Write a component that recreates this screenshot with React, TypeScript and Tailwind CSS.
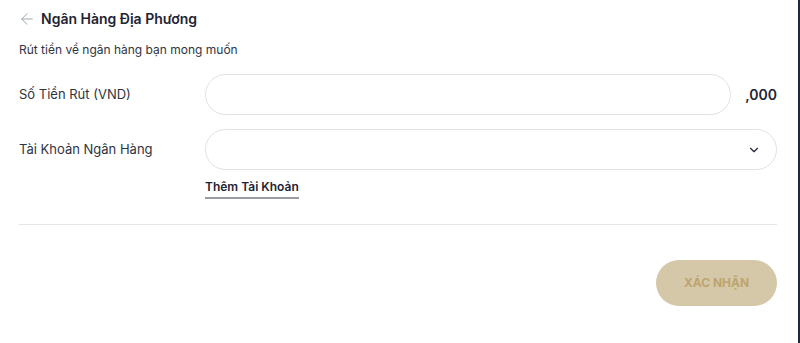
import { ArrowLeft, ChevronDown } from 'lucide-react';

export default function App() {
  return (
    <div className="flex h-[343px] w-[800px] bg-white font-['Inter',sans-serif] text-[#1f2433]">
      <div className="flex flex-1 flex-col pl-[19px] pr-[20px]">
        <div className="flex h-[37px] items-center gap-[5px]">
          <ArrowLeft size={18} strokeWidth={1.25} className="-ml-[1px] text-gray-400" />
          <h1 className="text-[14px] font-semibold">Ngân Hàng Địa Phương</h1>
        </div>
        <p className="mt-[5px] text-[12px] leading-[16px] text-[#30343f]">Rút tiền về ngân hàng bạn mong muốn</p>

        <div className="mt-[16px] flex items-center">
          <label className="w-[186px] text-[13px] text-[#30343f]">Số Tiền Rút (VND)</label>
          <input
            type="text"
            className="h-[41px] flex-1 rounded-full border border-[#e2e2e2] px-4 text-sm focus:outline-none"
          />
          <span className="ml-[14px] text-[14px] font-semibold">,000</span>
        </div>

        <div className="mt-[14px] flex items-center">
          <label className="w-[186px] text-[13px] text-[#30343f]">Tài Khoản Ngân Hàng</label>
          <div className="flex h-[41px] flex-1 items-center justify-end rounded-full border border-[#e2e2e2] pr-[15px]">
            <ChevronDown size={14} strokeWidth={2} className="text-[#1f2433]" />
          </div>
        </div>
        <div className="ml-[186px] mt-[3px]">
          <span className="inline-block border-b-2 border-[#9a9ca3] pb-[1px] text-[12px] font-semibold">Thêm Tài Khoản</span>
        </div>

        <div className="mt-[25px] h-px bg-[#e6e6e6]" />

        <div className="mt-[35px] flex justify-end">
          <button className="h-[46px] w-[121px] rounded-full bg-[#d5c8a9] text-[12px] font-bold text-[#bda46e]">
            XÁC NHẬN
          </button>
        </div>
      </div>
      <div className="w-px bg-white" />
      <div className="w-[2px] bg-[#1e2a3a]" />
    </div>
  );
}
